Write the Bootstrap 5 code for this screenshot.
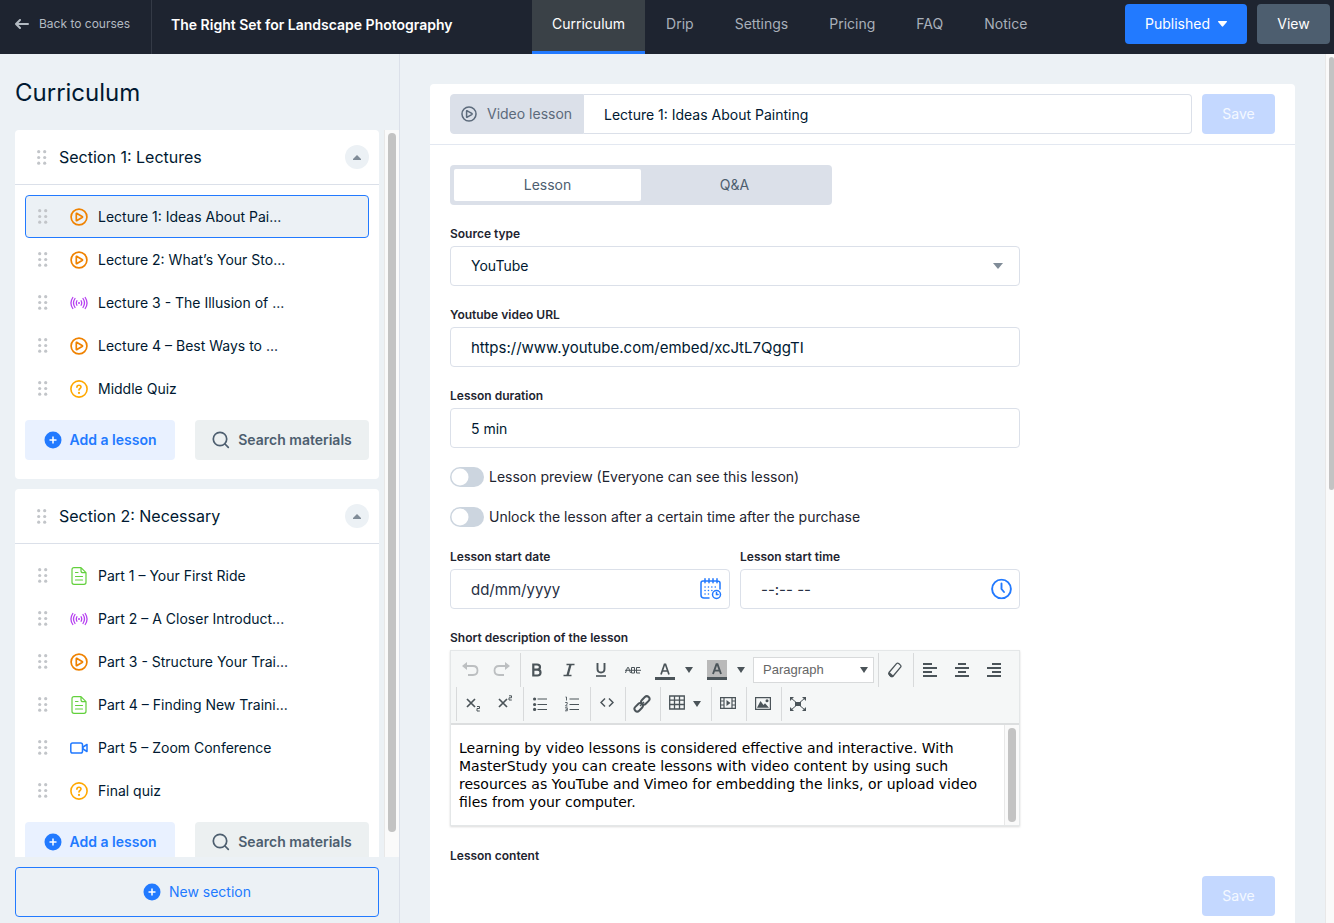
<!DOCTYPE html>
<html lang="en">
<head>
<meta charset="utf-8">
<meta name="viewport" content="width=device-width, initial-scale=1">
<title>Course builder</title>
<link href="https://cdn.jsdelivr.net/npm/bootstrap@5.3.0/dist/css/bootstrap.min.css" rel="stylesheet">
<style>
:root{--ink:#001931;--blue:#227aff;--line:#dbe0e9;--slate:#4d5e6f;--mist:#ecf1f5}
body{font-family:Inter,"Open Sans",sans-serif;font-size:14px;line-height:20px;color:var(--ink);background:var(--mist);height:100vh;overflow:hidden}
svg{display:block;flex:none}
a{text-decoration:none}
.topbar{background:#1e2430;height:54px}
.topbar-left{flex:0 1 532px;min-width:0}
.back-link{width:152px;padding:0 0 6px 15px;gap:10px;font-size:12px;color:#b3bac2;border-right:1px solid #343a46}
.course-title{font-size:14px;font-weight:600;color:#fff;margin:0 0 4px 19px}
.top-nav{gap:1px}
.top-tab{padding:0 20px 6px;color:#a9b0ba}
.top-tab.active{color:#fff;background:#3a4147;box-shadow:inset 0 -3px 0 var(--blue)}
.btn-tall{height:40px;border:0;border-radius:4px;padding:0 20px;font-size:14px;line-height:20px;font-weight:400;display:flex;flex-shrink:0;align-items:center;justify-content:center;white-space:nowrap}
.btn-published{background:var(--blue);color:#fff;gap:8px;width:122px}
.btn-view{background:#4d5e6f;color:#fff;width:73px}
.btn-save,.btn-save:disabled{background:#c4d8ff;color:#f4f8ff;opacity:1;width:73px}
.top-actions{padding:4px 4px 0 0;gap:10px}

.side-panel{width:400px;border-right:1px solid var(--line)}
.side-title{font-size:24px;line-height:30px;font-weight:400;padding:24px 15px 22px;margin:0}
.section-scroll{padding:0 5px 0 15px;overflow:auto;scrollbar-width:none}
.section-scroll::-webkit-scrollbar,.main-scroll::-webkit-scrollbar{display:none}
.track{background:#fafafa;border-left:1px solid #e8e8e8;padding:3px}
.thumb{background:#c3c3c3;border-radius:4px}
.side-thumb{width:8px;max-height:97%}
.section-card{background:#fff;border-radius:4px;margin-bottom:10px}
.section-head{height:55px;padding:0 10px 0 22px;border-bottom:1px solid var(--line);gap:12px}
.section-name{font-size:16px;line-height:22px;font-weight:400;margin:0}
.fold{width:24px;height:24px;border-radius:50%;background:var(--mist);border:0;padding:0}
.section-body{padding:10px 10px 19px}
.lesson{height:43px;padding:0 12px;border:1px solid transparent;border-radius:4px;color:var(--ink)}
.lesson.active{background:var(--mist);border-color:var(--blue)}
.lesson-icon{margin:0 10px 0 22px}
.section-tools{margin-top:10px;gap:20px}
.btn-add{background:#e9f1ff;color:var(--blue);font-weight:600;width:150px;gap:8px;padding:0}
.btn-find{background:#ecf0f1;color:var(--slate);font-weight:600;flex:1;gap:8px;padding:0}
.btn-new{height:50px;margin:10px 20px 6px 15px;border:1px solid var(--blue);color:var(--blue);background:none;gap:8px}

.lesson-card{background:#fff;border-radius:4px 4px 0 0;margin:30px 30px 0;min-height:100%}
.lesson-head{padding:10px 20px;border-bottom:1px solid #e3e8f1;gap:10px}
.field{height:40px;border:1px solid var(--line);border-radius:4px;padding:0 20px;font-size:14px;line-height:20px;color:var(--ink);background:#fff;width:100%}
.field.roomy{font-size:15px}
.field::placeholder{color:#273044;opacity:1}
select.field{appearance:none}
.kind{background:var(--line);color:#5c6a7b;border:1px solid var(--line);border-radius:4px 0 0 4px;width:134px;padding:0 0 0 10px;gap:10px}
.title-field{border-left:0;border-radius:0 4px 4px 0}
.lesson-body{padding:20px 20px 0}
.switch-tabs{background:var(--line);border-radius:4px;padding:4px;width:382px;height:40px}
.switch-tabs button{flex:1;border:0;border-radius:2px;background:none;color:var(--slate)}
.switch-tabs button.active{background:#fff}
.lesson-form{max-width:570px;padding-top:19px}
.tag{display:block;font-size:12px;line-height:20px;font-weight:600;color:#1e2430;margin:0 0 2px}
.block{margin-bottom:19px}
.dates{gap:10px}
.over-icon{position:absolute;right:17px;top:50%;transform:translateY(-50%);pointer-events:none}
.over-icon.near{right:8px}
.toggle-row{padding:0;margin:0 0 20px;min-height:20px;gap:5px;color:#1e2430}
.toggle-row .form-check-input{width:34px;height:20px;margin:0;float:none;border:0;background-color:#ccd5df;background-image:url("data:image/svg+xml,%3Csvg xmlns='http://www.w3.org/2000/svg' viewBox='0 0 20 20'%3E%3Ccircle cx='10' cy='10' r='8.5' fill='%23fff'/%3E%3C/svg%3E")}
.editor{border:1px solid #e4e7e8;box-shadow:0 1px 2px rgba(0,0,0,.15)}
.tool-area{background:#f5f7f7;border-bottom:2px solid #dcdedf;padding:2px 0 2px 3px;color:#4b5459}
.tool-group{height:34px;padding-right:2px;border-right:1px solid #d8dadb}
.tool-row .tool-group:last-child{border-right:0}
.tool{width:32px;height:34px;border:0;background:none;color:inherit;padding:0;display:flex;align-items:center;justify-content:center}
.tool.slim{width:16px}
.second-row .tool.slim{justify-content:start}
.tool:disabled{color:#bcbfc1}
.tool-picker{margin-right:2px}
.tool-picker .over-icon{right:6px}
.tool-select{width:121px;height:26px;border:1px solid #d8dadb;border-radius:0;background:#fff;font-family:"Liberation Sans",sans-serif;font-size:13px;color:#666;padding:0 9px;appearance:none}
.second-row{border-left:1px solid #d8dadb;margin-left:2px}
.editor-text{font-family:"DejaVu Sans",sans-serif;font-size:14px;line-height:18px;color:#000;padding:14px 8px}
.editor .track{width:15px}
.page-track{width:9px;padding:3px 0 0 3px;overflow:hidden}
</style>
</head>
<body class="d-flex flex-column">
<svg width="0" height="0" class="position-absolute" aria-hidden="true">
<symbol id="grip" viewBox="0 0 10 15"><g fill="#c2c5c9"><circle cx="1.7" cy="1.7" r="1.6"/><circle cx="7.7" cy="1.7" r="1.6"/><circle cx="1.7" cy="7.5" r="1.6"/><circle cx="7.7" cy="7.5" r="1.6"/><circle cx="1.7" cy="13.2" r="1.6"/><circle cx="7.7" cy="13.2" r="1.6"/></g></symbol>
<symbol id="play" viewBox="0 0 18 18"><g fill="none" stroke="currentColor" stroke-width="1.7" stroke-linejoin="round"><circle cx="9" cy="9" r="7.9"/><path d="M6.3 5.8v6.4q0 .7.7.4l5.1-3q.9-.6 0-1.2L7 5.4q-.7-.3-.7.4z"/></g></symbol>
<symbol id="stream" viewBox="0 0 18 14"><g fill="none" stroke="currentColor" stroke-width="1.5" stroke-linecap="round"><path d="M2.800 1.500Q-.900 7 2.800 12.500M5 2.500Q2 7 5 11.500M15.200 1.500Q18.900 7 15.200 12.500M13 2.500Q16 7 13 11.500M6.900 4.800Q5.700 7 6.900 9.200M11.100 4.800Q12.300 7 11.100 9.200" stroke-width="1.300"/></g><circle cx="9" cy="7" r="1" fill="currentColor"/></symbol>
<symbol id="quiz" viewBox="0 0 18 18"><g fill="none" stroke="currentColor" stroke-width="1.6" stroke-linecap="round"><circle cx="9" cy="9" r="8.1"/><path d="M6.900 7.200q0-2 2.100-2 2 0 2 1.800c0 1.500-2 1.500-2 3.100"/></g><circle cx="9" cy="12.900" r="1.100" fill="currentColor"/></symbol>
<symbol id="doc" viewBox="0 0 16 18"><g fill="none" stroke="currentColor" stroke-width="1.200" stroke-linecap="round" stroke-linejoin="round"><path d="M10 .7H3Q1 .7 1 2.700v12.600q0 2 2 2h10q2 0 2-2V5.700zM10 .7v3q0 2 2 2h3M4.500 5.500h2.500M4.500 9.500h7M4.500 13h7"/></g></symbol>
<symbol id="cam" viewBox="0 0 18 12"><g fill="none" stroke="currentColor" stroke-width="1.500" stroke-linejoin="round"><rect x=".8" y="1" width="11.700" height="10" rx="1.800"/><path d="M13 5l4-2.500v7L13 7z"/></g></symbol>
<symbol id="plus" viewBox="0 0 18 18"><circle cx="9" cy="9" r="8.500" fill="currentColor"/><path d="M9 5.500v7M5.500 9h7" stroke="#fff" stroke-width="1.500"/></symbol>
<symbol id="find" viewBox="0 0 18 18"><g fill="none" stroke="currentColor" stroke-width="1.700" stroke-linecap="round"><circle cx="8" cy="8" r="6.700"/><path d="M13 13l3.300 3.300"/></g></symbol>
<symbol id="down" viewBox="0 0 8 6"><path d="M0 0h8L4 6z" fill="currentColor"/></symbol>
</svg>

<header class="topbar d-flex flex-shrink-0">
  <div class="topbar-left d-flex align-items-stretch">
    <a href="#" class="back-link d-flex align-items-center flex-shrink-0"><svg width="14" height="10" viewBox="0 0 14 10" fill="none" stroke="currentColor" stroke-width="2" stroke-linecap="round" stroke-linejoin="round"><path d="M5 1L1 5l4 4M1 5h12"/></svg>Back to courses</a>
    <h1 class="course-title align-self-center text-nowrap">The Right Set for Landscape Photography</h1>
  </div>
  <nav class="top-nav d-flex align-items-stretch">
    <a href="#" class="top-tab active d-flex align-items-center">Curriculum</a>
    <a href="#" class="top-tab d-flex align-items-center">Drip</a>
    <a href="#" class="top-tab d-flex align-items-center">Settings</a>
    <a href="#" class="top-tab d-flex align-items-center">Pricing</a>
    <a href="#" class="top-tab d-flex align-items-center">FAQ</a>
    <a href="#" class="top-tab d-flex align-items-center">Notice</a>
  </nav>
  <div class="top-actions d-flex ms-auto">
    <button type="button" class="btn btn-tall btn-published">Published<svg width="9" height="6" viewBox="0 0 9 6"><path d="M.5 0h8q.8.300.3 1L5.200 5.300q-.7.700-1.400 0L.2 1Q-.3.300.5 0z" fill="#fff"/></svg></button>
    <button type="button" class="btn btn-tall btn-view">View</button>
  </div>
</header>

<div class="d-flex flex-grow-1 overflow-hidden">
  <aside class="side-panel d-flex flex-column flex-shrink-0">
    <h2 class="side-title">Curriculum</h2>
    <div class="d-flex flex-grow-1 overflow-hidden">
      <div class="section-scroll flex-grow-1">
        <section class="section-card">
          <div class="section-head d-flex align-items-center"><svg width="10" height="15"><use href="#grip"/></svg><h3 class="section-name flex-grow-1">Section 1: Lectures</h3>
            <button type="button" class="fold d-flex align-items-center justify-content-center" aria-label="Collapse section"><svg width="8" height="5" viewBox="0 0 8 5"><path d="M4 0l4 4v1H0V4z" fill="#808c98"/></svg></button></div>
          <div class="section-body">
            <a href="#" class="lesson active d-flex align-items-center"><svg width="10" height="15"><use href="#grip"/></svg><svg class="lesson-icon" width="18" height="18" color="#ef8200"><use href="#play"/></svg>Lecture 1: Ideas About Pai...</a>
            <a href="#" class="lesson d-flex align-items-center"><svg width="10" height="15"><use href="#grip"/></svg><svg class="lesson-icon" width="18" height="18" color="#ef8200"><use href="#play"/></svg>Lecture 2: What’s Your Sto...</a>
            <a href="#" class="lesson d-flex align-items-center"><svg width="10" height="15"><use href="#grip"/></svg><svg class="lesson-icon" width="18" height="14" color="#b641f0"><use href="#stream"/></svg>Lecture 3 - The Illusion of ...</a>
            <a href="#" class="lesson d-flex align-items-center"><svg width="10" height="15"><use href="#grip"/></svg><svg class="lesson-icon" width="18" height="18" color="#ef8200"><use href="#play"/></svg>Lecture 4 – Best Ways to ...</a>
            <a href="#" class="lesson d-flex align-items-center"><svg width="10" height="15"><use href="#grip"/></svg><svg class="lesson-icon" width="18" height="18" color="#ffa800"><use href="#quiz"/></svg>Middle Quiz</a>
            <div class="section-tools d-flex">
              <button type="button" class="btn btn-tall btn-add"><svg width="18" height="18"><use href="#plus"/></svg>Add a lesson</button>
              <button type="button" class="btn btn-tall btn-find"><svg width="18" height="18"><use href="#find"/></svg>Search materials</button>
            </div>
          </div>
        </section>
        <section class="section-card">
          <div class="section-head d-flex align-items-center"><svg width="10" height="15"><use href="#grip"/></svg><h3 class="section-name flex-grow-1">Section 2: Necessary</h3>
            <button type="button" class="fold d-flex align-items-center justify-content-center" aria-label="Collapse section"><svg width="8" height="5" viewBox="0 0 8 5"><path d="M4 0l4 4v1H0V4z" fill="#808c98"/></svg></button></div>
          <div class="section-body">
            <a href="#" class="lesson d-flex align-items-center"><svg width="10" height="15"><use href="#grip"/></svg><svg class="lesson-icon" width="18" height="18" color="#62d03c"><use href="#doc"/></svg>Part 1 – Your First Ride</a>
            <a href="#" class="lesson d-flex align-items-center"><svg width="10" height="15"><use href="#grip"/></svg><svg class="lesson-icon" width="18" height="14" color="#b641f0"><use href="#stream"/></svg>Part 2 – A Closer Introduct...</a>
            <a href="#" class="lesson d-flex align-items-center"><svg width="10" height="15"><use href="#grip"/></svg><svg class="lesson-icon" width="18" height="18" color="#ef8200"><use href="#play"/></svg>Part 3 - Structure Your Trai...</a>
            <a href="#" class="lesson d-flex align-items-center"><svg width="10" height="15"><use href="#grip"/></svg><svg class="lesson-icon" width="18" height="18" color="#62d03c"><use href="#doc"/></svg>Part 4 – Finding New Traini...</a>
            <a href="#" class="lesson d-flex align-items-center"><svg width="10" height="15"><use href="#grip"/></svg><svg class="lesson-icon" width="18" height="12" color="#227aff"><use href="#cam"/></svg>Part 5 – Zoom Conference</a>
            <a href="#" class="lesson d-flex align-items-center"><svg width="10" height="15"><use href="#grip"/></svg><svg class="lesson-icon" width="18" height="18" color="#ffa800"><use href="#quiz"/></svg>Final quiz</a>
            <div class="section-tools d-flex">
              <button type="button" class="btn btn-tall btn-add"><svg width="18" height="18"><use href="#plus"/></svg>Add a lesson</button>
              <button type="button" class="btn btn-tall btn-find"><svg width="18" height="18"><use href="#find"/></svg>Search materials</button>
            </div>
          </div>
        </section>
      </div>
      <div class="track"><div class="thumb side-thumb h-100"></div></div>
    </div>
    <button type="button" class="btn btn-tall btn-new"><svg width="18" height="18"><use href="#plus"/></svg>New section</button>
  </aside>

  <main class="main-scroll flex-grow-1 overflow-auto">
    <div class="lesson-card">
      <div class="lesson-head d-flex">
        <div class="d-flex flex-grow-1">
          <label for="lessonTitle" class="kind d-flex align-items-center flex-shrink-0"><svg width="16" height="16"><use href="#play"/></svg>Video lesson</label>
          <input id="lessonTitle" class="field title-field" type="text" value="Lecture 1: Ideas About Painting">
        </div>
        <button type="button" class="btn btn-tall btn-save" disabled>Save</button>
      </div>
      <div class="lesson-body">
        <div class="switch-tabs d-flex"><button type="button" class="active">Lesson</button><button type="button">Q&amp;A</button></div>
        <form class="lesson-form">
          <div class="block"><label class="tag" for="source">Source type</label>
            <div class="position-relative"><select id="source" class="field"><option>YouTube</option></select><svg class="over-icon" width="10" height="6" viewBox="0 0 10 6"><path d="M0 0h10L5 6z" fill="#808c98"/></svg></div></div>
          <div class="block"><label class="tag" for="url">Youtube video URL</label><input id="url" class="field roomy" type="text" value="https://www.youtube.com/embed/xcJtL7QggTI"></div>
          <div class="block"><label class="tag" for="dur">Lesson duration</label><input id="dur" class="field" type="text" value="5 min"></div>
          <div class="form-check form-switch toggle-row d-flex align-items-center"><input class="form-check-input" type="checkbox" role="switch" id="preview"><label for="preview">Lesson preview (Everyone can see this lesson)</label></div>
          <div class="form-check form-switch toggle-row d-flex align-items-center"><input class="form-check-input" type="checkbox" role="switch" id="unlock"><label for="unlock">Unlock the lesson after a certain time after the purchase</label></div>
          <div class="block dates d-flex">
            <div class="flex-fill"><label class="tag" for="date">Lesson start date</label>
              <div class="position-relative"><input id="date" class="field roomy" type="text" placeholder="dd/mm/yyyy"><svg class="over-icon near" width="22" height="22" viewBox="0 0 22 22" fill="none" stroke="#227aff" stroke-width="1.500" stroke-linecap="round"><path d="M9 20H4q-3 0-3-3V5q0-2 2-2h14q3 0 3 2v6M5 .8v4M9 .8v4M13 .8v4M17 .8v4"/><path d="M5 9h12M5 12.500h7M5 16h5" stroke-dasharray=".1 3.300"/><circle cx="16.500" cy="16.500" r="4"/><path d="M16.500 14.500v2h1.500"/></svg></div></div>
            <div class="flex-fill"><label class="tag" for="time">Lesson start time</label>
              <div class="position-relative"><input id="time" class="field roomy" type="text" placeholder="--:-- --"><svg class="over-icon near" width="21" height="21" viewBox="0 0 21 21" fill="none" stroke="#227aff" stroke-width="1.900" stroke-linecap="round"><circle cx="10.500" cy="10.500" r="9.400"/><path d="M10.500 5v5.500l2.500 3"/></svg></div></div>
          </div>
          <label class="tag" for="format">Short description of the lesson</label>
          <div class="editor mb-3">
            <div class="tool-area">
              <div class="tool-row d-flex">
                <div class="tool-group d-flex">
                  <button type="button" class="tool" disabled aria-label="Undo"><svg width="18" height="16" viewBox="0 0 18 16"><path d="M6 0v8L1 4z" fill="currentColor"/><path d="M5 4h7q4.500 0 4.500 4.500T12 13H7" fill="none" stroke="currentColor" stroke-width="1.800"/></svg></button>
                  <button type="button" class="tool" disabled aria-label="Redo"><svg width="18" height="16" viewBox="0 0 18 16"><path d="M12 0v8l5-4z" fill="currentColor"/><path d="M13 4H6Q1.500 4 1.500 8.500T6 13h5" fill="none" stroke="currentColor" stroke-width="1.800"/></svg></button>
                </div>
                <div class="tool-group d-flex align-items-center">
                  <button type="button" class="tool" aria-label="Bold"><svg width="12" height="14" viewBox="0 0 12 14" fill="none" stroke="currentColor" stroke-width="2.200"><path d="M2.300 1.500h3.700q3 0 3 2.600T6 6.700H2.300zM2.300 6.700h4.200q3 0 3 2.900T6.500 12.500H2.300z"/></svg></button>
                  <button type="button" class="tool" aria-label="Italic"><svg width="12" height="14" viewBox="0 0 12 14" fill="none" stroke="currentColor"><path d="M3.500 1.500h8M.5 12.500h8" stroke-width="1.600"/><path d="M7.500 1.500l-3 11" stroke-width="2.300"/></svg></button>
                  <button type="button" class="tool" aria-label="Underline"><svg width="12" height="14" viewBox="0 0 12 14" fill="none" stroke="currentColor"><path d="M2.500 0v6q0 3.500 3.500 3.500T9.500 6V0" stroke-width="1.900"/><path d="M1 13h10" stroke-width="1.600"/></svg></button>
                  <button type="button" class="tool" aria-label="Strikethrough"><svg width="16" height="8" viewBox="0 0 16 8" fill="none" stroke="currentColor" stroke-width="1"><path d="M.5 7L2.500 1.500h1L5.500 7M6.500 1.500V7h3V1.500zM15 1.500h-3.500V7H15M0 4.300h16"/></svg></button>
                  <button type="button" class="tool" aria-label="Text colour"><svg width="20" height="20" viewBox="0 0 20 20" fill="none" stroke="currentColor"><path d="M6 14.500L9.500 4.300h1L14 14.500M7.500 11h5" stroke-width="1.700"/><path d="M0 18.500h20" stroke-width="3"/></svg></button>
                  <button type="button" class="tool slim me-1" aria-label="Text colours"><svg width="8" height="6"><use href="#down"/></svg></button>
                  <button type="button" class="tool" aria-label="Highlight"><svg width="20" height="20" viewBox="0 0 20 20" fill="none" stroke="currentColor"><path d="M0 0h20v18H0z" fill="#b9b9b9" stroke="none"/><path d="M6 14L9.500 4.300h1L14 14M7.500 10.600h5" stroke-width="1.900"/><path d="M0 18.500h20" stroke-width="3"/></svg></button>
                  <button type="button" class="tool slim me-1" aria-label="Highlight colours"><svg width="8" height="6"><use href="#down"/></svg></button>
                  <div class="tool-picker position-relative"><select id="format" class="tool-select"><option>Paragraph</option></select><svg class="over-icon" width="8" height="6"><use href="#down"/></svg></div>
                </div>
                <div class="tool-group d-flex"><button type="button" class="tool" aria-label="Clear formatting"><svg width="14" height="16" viewBox="0 0 14 16"><path d="M1 10.500L8.500 1.600q1-1 2.200 0l1.700 1.500q1 1 .2 2.100L5.200 14q-1 1-2.200.100l-1.600-1.400q-1.200-1-.4-2.200z" fill="none" stroke="currentColor" stroke-width="1.300"/><path d="M1 9.800l4.800 4.100-1 1.200q-1.200.6-2.300-.2L1 13.400z" fill="currentColor"/></svg></button></div>
                <div class="tool-group d-flex">
                  <button type="button" class="tool" aria-label="Align left"><svg width="14" height="14" viewBox="0 0 14 14" fill="currentColor"><path d="M0 0h9v2H0zM0 4h14v2H0zM0 8h9v2H0zM0 12h14v2H0z"/></svg></button>
                  <button type="button" class="tool" aria-label="Align centre"><svg width="14" height="14" viewBox="0 0 14 14" fill="currentColor"><path d="M3 0h8v2H3zM0 4h14v2H0zM3 8h8v2H3zM0 12h14v2H0z"/></svg></button>
                  <button type="button" class="tool" aria-label="Align right"><svg width="14" height="14" viewBox="0 0 14 14" fill="currentColor"><path d="M5 0h9v2H5zM0 4h14v2H0zM5 8h9v2H5zM0 12h14v2H0z"/></svg></button>
                </div>
              </div>
              <div class="tool-row second-row d-flex">
                <div class="tool-group d-flex">
                  <button type="button" class="tool" aria-label="Subscript"><svg width="15" height="15" viewBox="0 0 15 15" fill="none" stroke="currentColor"><path d="M1 2l8 8M9 2L1 10" stroke-width="1.700"/><path d="M11 9.500h2.500v2H11v2.500h2.800"/></svg></button>
                  <button type="button" class="tool" aria-label="Superscript"><svg width="15" height="18" viewBox="0 0 15 18" fill="none" stroke="currentColor"><path d="M1 4l8 8M9 4L1 12" stroke-width="1.700"/><path d="M11 .8h2.500v2H11v2.200h2.800"/></svg></button>
                </div>
                <div class="tool-group d-flex">
                  <button type="button" class="tool" aria-label="Bulleted list"><svg width="14" height="14" viewBox="0 0 14 14"><path d="M4.500 2H14M4.500 7.500H14M4.500 12.500H14" stroke="currentColor"/><g fill="currentColor"><circle cx="1.600" cy="2" r="1.600"/><circle cx="1.600" cy="7.500" r="1.600"/><circle cx="1.600" cy="12.400" r="1.600"/></g></svg></button>
                  <button type="button" class="tool" aria-label="Numbered list"><svg width="14" height="16" viewBox="0 0 14 16" fill="none" stroke="currentColor"><path d="M4.500 3H14M4.500 8.500H14M4.500 13.500H14"/><path d="M.5 1h1v3.500M.2 6.500h2v1.500L.5 10h2M0 11.800h2.300v3H0M.7 13.300h1.600" stroke-width=".9"/></svg></button>
                </div>
                <div class="tool-group d-flex"><button type="button" class="tool" aria-label="Source"><svg width="14" height="14" viewBox="0 0 14 14" fill="none" stroke="currentColor" stroke-width="1.500"><path d="M5 1.500L1 5.500l4 4M9 1.500l4 4-4 4"/></svg></button></div>
                <div class="tool-group d-flex"><button type="button" class="tool" aria-label="Link"><svg width="18" height="18" viewBox="0 0 18 18" fill="none" stroke="currentColor" stroke-width="2"><rect x="-4.300" y="-2.700" width="9.500" height="5.400" rx="2.700" transform="translate(12 5.700) rotate(-45)"/><rect x="-5.200" y="-2.700" width="9.500" height="5.400" rx="2.700" transform="translate(6 12) rotate(-45)"/><path d="M7 11l4-4" stroke-width="1.500"/></svg></button></div>
                <div class="tool-group d-flex"><button type="button" class="tool" aria-label="Table"><svg width="16" height="18" viewBox="0 0 16 18" fill="none" stroke="currentColor"><path d="M.7 1h14.600v13H.7zM0 5.200h16M0 9.500h16M5.500 1v13M10.500 1v13" stroke-width="1.300"/></svg></button><button type="button" class="tool slim" aria-label="Table options"><svg width="8" height="6"><use href="#down"/></svg></button></div>
                <div class="tool-group d-flex"><button type="button" class="tool" aria-label="Video"><svg width="16" height="16" viewBox="0 0 16 16" fill="none" stroke="currentColor" stroke-width="1.200"><path d="M.6 1.600h14.800v10.800H.6zM4 1v12M12 1v12M.6 5H4M.6 9H4M12 5h3.400M12 9h3.400"/><path d="M6.500 4l4 3-4 3z" fill="currentColor" stroke="none"/></svg></button></div>
                <div class="tool-group d-flex"><button type="button" class="tool" aria-label="Image"><svg width="16" height="16" viewBox="0 0 16 16"><path d="M.6 1.600h14.800v11.800H.6z" fill="none" stroke="currentColor" stroke-width="1.200"/><path d="M2 11.800L5.500 5l3 4 1.500-1.700 4 4.500z" fill="currentColor"/><circle cx="12" cy="4.700" r="1.500" fill="currentColor"/></svg></button></div>
                <div class="tool-group d-flex"><button type="button" class="tool" aria-label="Full screen"><svg width="16" height="14" viewBox="0 0 16 14" fill="currentColor"><path d="M5 5h6v4H5zM0 0h4L0 4zM16 0h-4L16 4zM0 14h4L0 10zM16 14h-4L16 10z"/><path d="M1 1l14 12M15 1L1 13" stroke="currentColor" stroke-width="1"/></svg></button></div>
              </div>
            </div>
            <div class="d-flex">
              <div class="editor-text flex-grow-1" contenteditable="true">Learning by video lessons is considered effective and interactive. With MasterStudy you can create lessons with video content by using such resources as YouTube and Vimeo for embedding the links, or upload video files from your computer.</div>
              <div class="track flex-shrink-0"><div class="thumb h-100"></div></div>
            </div>
          </div>
          <p class="tag pt-1">Lesson content</p>
        </form>
        <div class="d-flex justify-content-end pt-2"><button type="button" class="btn btn-tall btn-save" disabled>Save</button></div>
      </div>
    </div>
  </main>
  <div class="track page-track flex-shrink-0"><div class="thumb h-50"></div></div>
</div>
<script src="https://cdn.jsdelivr.net/npm/bootstrap@5.3.0/dist/js/bootstrap.bundle.min.js"></script>
</body>
</html>
